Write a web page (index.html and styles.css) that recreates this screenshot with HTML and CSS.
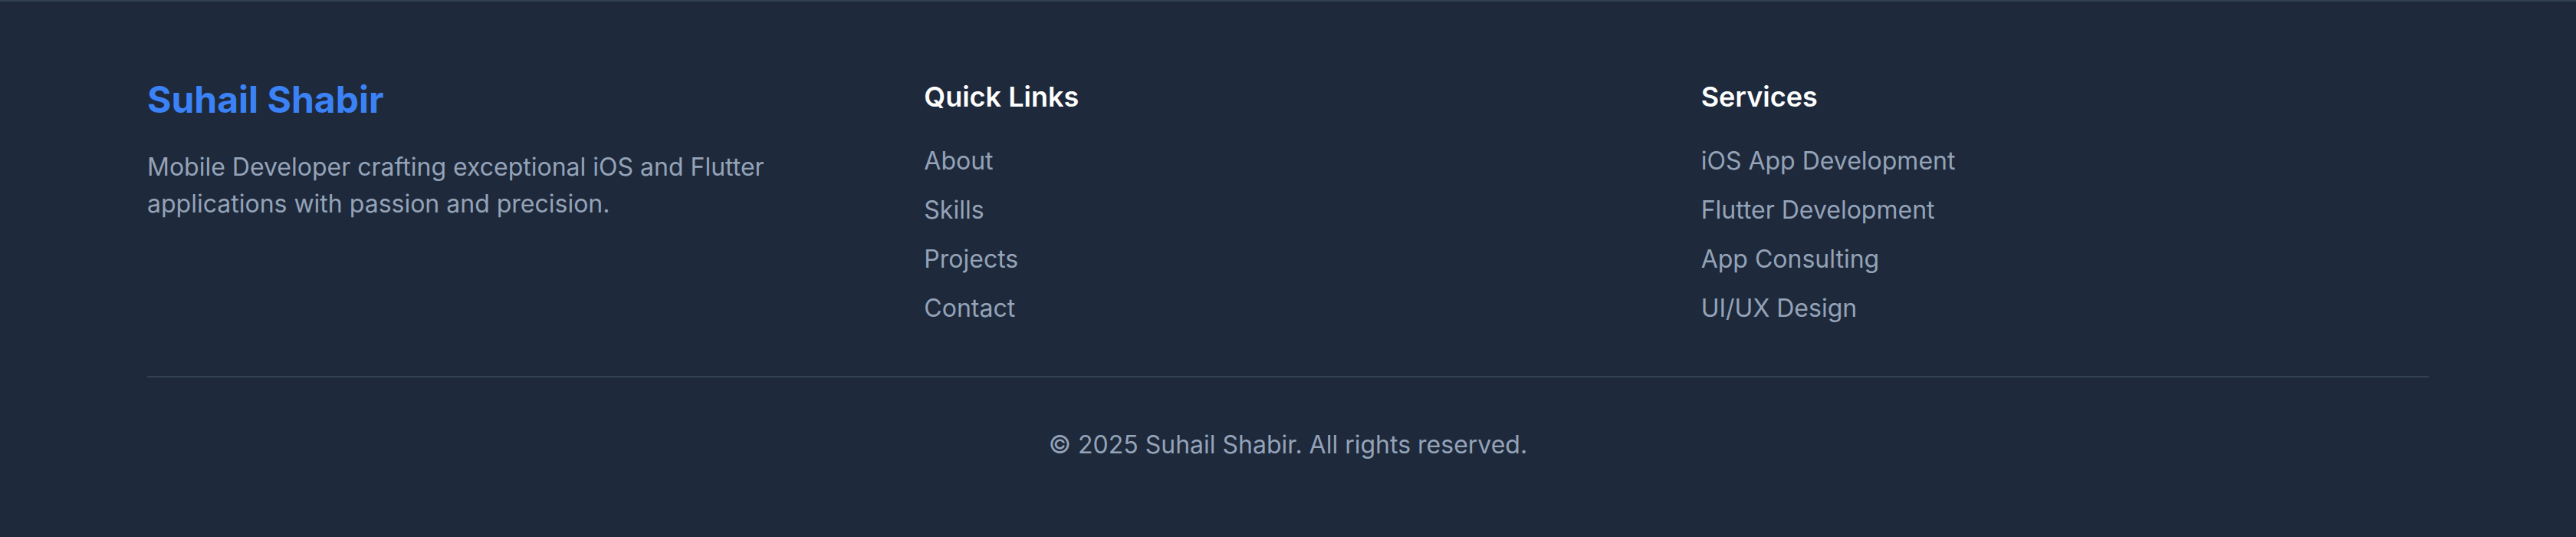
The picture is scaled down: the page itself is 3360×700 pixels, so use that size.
FILE: index.html
```html
<!DOCTYPE html>
<html lang="en">
<head>
<meta charset="utf-8">
<title>Footer</title>
<link rel="stylesheet" href="styles.css">
</head>
<body>
<footer class="footer">
  <div class="container">
    <div class="grid">
      <div class="col">
        <h3 class="brand">Suhail Shabir</h3>
        <p class="desc">Mobile Developer crafting exceptional iOS and Flutter applications with passion and precision.</p>
      </div>
      <div class="col">
        <h4 class="heading">Quick Links</h4>
        <ul class="links">
          <li><a href="#about">About</a></li>
          <li><a href="#skills">Skills</a></li>
          <li><a href="#projects">Projects</a></li>
          <li><a href="#contact">Contact</a></li>
        </ul>
      </div>
      <div class="col">
        <h4 class="heading">Services</h4>
        <ul class="links">
          <li>iOS App Development</li>
          <li>Flutter Development</li>
          <li>App Consulting</li>
          <li>UI/UX Design</li>
        </ul>
      </div>
    </div>
    <div class="bottom">
      <p class="copy">© 2025 Suhail Shabir. All rights reserved.</p>
    </div>
  </div>
</footer>
</body>
</html>
```
FILE: styles.css
```css
* { box-sizing: border-box; }
html, body { margin: 0; padding: 0; }
body {
  background: #1e293b;
  font-family: Inter, "Noto Sans", "Liberation Sans", sans-serif;
  color: #94a3b8;
}
.footer {
  background: #1e293b;
  border-top: 2px solid #334155;
  padding: 96px 0;
}
.container {
  padding: 0 192px;
}
.grid {
  display: grid;
  grid-template-columns: repeat(3, 1fr);
  gap: 64px;
}
.brand {
  margin: 0 0 32px;
  font-size: 48px;
  line-height: 64px;
  font-weight: 700;
  color: #3b82f6;
}
.desc {
  margin: 0;
  font-size: 32px;
  line-height: 48px;
  max-width: 900px;
}
.heading {
  margin: 0 0 32px;
  font-size: 36px;
  line-height: 56px;
  font-weight: 600;
  color: #ffffff;
}
.links {
  list-style: none;
  margin: 0;
  padding: 0;
  display: flex;
  flex-direction: column;
  gap: 16px;
  font-size: 32px;
  line-height: 48px;
}
.links a {
  color: inherit;
  text-decoration: none;
}
.bottom {
  margin-top: 64px;
  border-top: 2px solid #334155;
  padding-top: 64px;
  text-align: center;
}
.copy {
  margin: 0;
  font-size: 32px;
  line-height: 48px;
}
```
